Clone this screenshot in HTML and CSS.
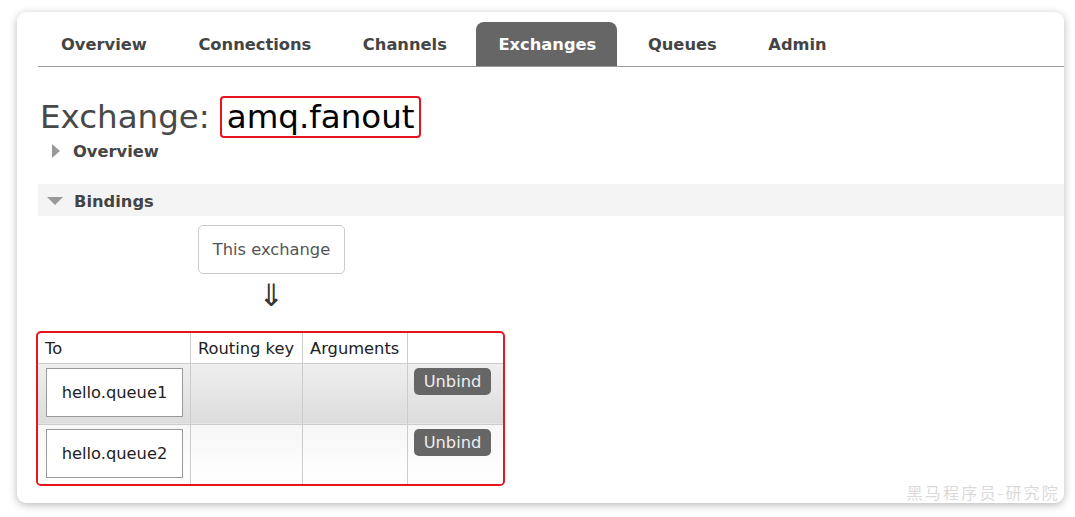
FILE: index.html
```html
<!DOCTYPE html>
<html lang="en">
<head>
<meta charset="utf-8">
<title>Exchange: amq.fanout</title>
<link rel="stylesheet" href="styles.css">
</head>
<body>
<div class="card">
  <nav class="tabs">
    <a class="tab">Overview</a>
    <a class="tab">Connections</a>
    <a class="tab">Channels</a>
    <a class="tab active">Exchanges</a>
    <a class="tab">Queues</a>
    <a class="tab">Admin</a>
  </nav>
  <h1 class="title"><span class="title-label">Exchange:</span> <span class="title-name">amq.fanout</span></h1>
  <div class="section-toggle collapsed"><span class="tri-right"></span><span>Overview</span></div>
  <div class="section-toggle open"><span class="tri-down"></span><span>Bindings</span></div>
  <div class="bindings">
    <div class="source-col">
      <div class="this-exchange">This exchange</div>
      <div class="arrow">&#8659;</div>
    </div>
    <div class="table-frame">
      <table class="bind-table">
        <thead>
          <tr><th class="c-to">To</th><th class="c-rk">Routing key</th><th class="c-args">Arguments</th><th class="c-act"></th></tr>
        </thead>
        <tbody>
          <tr class="odd">
            <td><div class="queue">hello.queue1</div></td><td></td><td></td>
            <td><button class="unbind">Unbind</button></td>
          </tr>
          <tr class="even">
            <td><div class="queue">hello.queue2</div></td><td></td><td></td>
            <td><button class="unbind">Unbind</button></td>
          </tr>
        </tbody>
      </table>
    </div>
  </div>
  <div class="watermark">黑马程序员-研究院</div>
</div>
</body>
</html>
```
FILE: styles.css
```css
* { box-sizing: border-box; }
html, body { margin: 0; padding: 0; background: #fff; }
body {
  font-family: "DejaVu Sans", Verdana, "Noto Sans CJK SC", sans-serif;
  color: #444;
  width: 1075px;
  height: 517px;
  overflow: hidden;
}
.card {
  position: relative;
  margin: 12px 0 0 17px;
  width: 1047px;
  height: 491px;
  background: #fff;
  border-radius: 9px;
  box-shadow: 0 2px 8px rgba(0,0,0,0.28);
  padding: 10px 0 0 21px;
}
.tabs {
  display: flex;
  gap: 8.6px;
  border-bottom: 1px solid #999;
  height: 45px;
  padding-left: 1px;
}
.tab {
  display: flex;
  align-items: center;
  padding: 1px 21px 0 22px;
  height: 44px;
  font-weight: bold;
  font-size: 16.3px;
  color: #444;
  border-radius: 8px 8px 0 0;
}
.tab.active {
  background: #666;
  color: #fff;
}
.title {
  margin: 29px 0 0 2px;
  display: flex;
  align-items: center;
  font-weight: normal;
  font-size: 32.5px;
  color: #484848;
  height: 42px;
}
.title-label { margin-right: 10px; }
.title-name {
  border: 2px solid #e8141b;
  border-radius: 4px;
  padding: 0 5px;
  height: 42px;
  line-height: 38px;
  color: #000;
}
.section-toggle {
  display: flex;
  align-items: center;
  font-weight: bold;
  font-size: 16.3px;
  color: #444;
}
.section-toggle.collapsed {
  height: 24px;
  margin-top: 1px;
  padding: 0 0 0 14px;
}
.section-toggle.open {
  margin-top: 21px;
  height: 32px;
  background: #f4f4f4;
  padding: 2px 0 0 9px;
}
.tri-right {
  width: 0; height: 0;
  border-top: 7px solid transparent;
  border-bottom: 7px solid transparent;
  border-left: 8px solid #999;
  margin-right: 13px;
}
.tri-down {
  width: 0; height: 0;
  border-left: 8px solid transparent;
  border-right: 8px solid transparent;
  border-top: 8px solid #999;
  margin-right: 11px;
}
.bindings {
  display: flex;
  flex-direction: column;
}
.source-col {
  display: flex;
  flex-direction: column;
  align-items: center;
  width: 147px;
  margin: 9px 0 0 160px;
}
.this-exchange {
  width: 147px;
  height: 49px;
  border: 1px solid #ccc;
  border-radius: 5px;
  display: flex;
  align-items: center;
  justify-content: center;
  font-size: 16.3px;
  color: #555;
}
.arrow {
  font-size: 31px;
  line-height: 36px;
  height: 36px;
  margin-top: 3px;
  color: #333;
}
.table-frame {
  margin: 18px 0 0 -2px;
  width: 469px;
  border: 2px solid #e8141b;
  border-radius: 5px;
  overflow: hidden;
}
.bind-table {
  border-collapse: collapse;
  width: 465px;
  font-size: 16.3px;
  color: #222;
}
.bind-table th {
  font-weight: normal;
  text-align: left;
  height: 30px;
  padding: 2px 7px 0 7px;
  border-left: 1px solid #ccc;
  white-space: nowrap;
}
.bind-table th:first-child, .bind-table td:first-child { border-left: none; }
.c-to { width: 152px; }
.c-rk { width: 112px; }
.c-args { width: 105px; }
.bind-table td {
  border-left: 1px solid #ccc;
  border-top: 1px solid #ccc;
  padding: 4px 7px;
  vertical-align: top;
}
.bind-table td:first-child { padding-left: 8px; }
.bind-table tr.odd td { height: 61px; background: linear-gradient(#efefef, #dcdcdc); }
.bind-table tr.even td { height: 60px; background: linear-gradient(#f6f6f6, #fff); }
.queue {
  width: 137px;
  height: 49px;
  border: 1px solid #999;
  background: #fff;
  display: flex;
  align-items: center;
  justify-content: center;
  font-size: 16.3px;
  color: #222;
}
.unbind {
  font-family: inherit;
  font-size: 16.3px;
  background: #666;
  color: #eee;
  border: none;
  border-radius: 5px;
  height: 27px;
  width: 77px;
  padding: 0;
  margin-left: -1px;
}
.watermark {
  position: absolute;
  right: 4px;
  bottom: -1px;
  font-family: "Noto Sans CJK SC", sans-serif;
  font-size: 16px;
  letter-spacing: 2.2px;
  color: #dadada;
}
```
